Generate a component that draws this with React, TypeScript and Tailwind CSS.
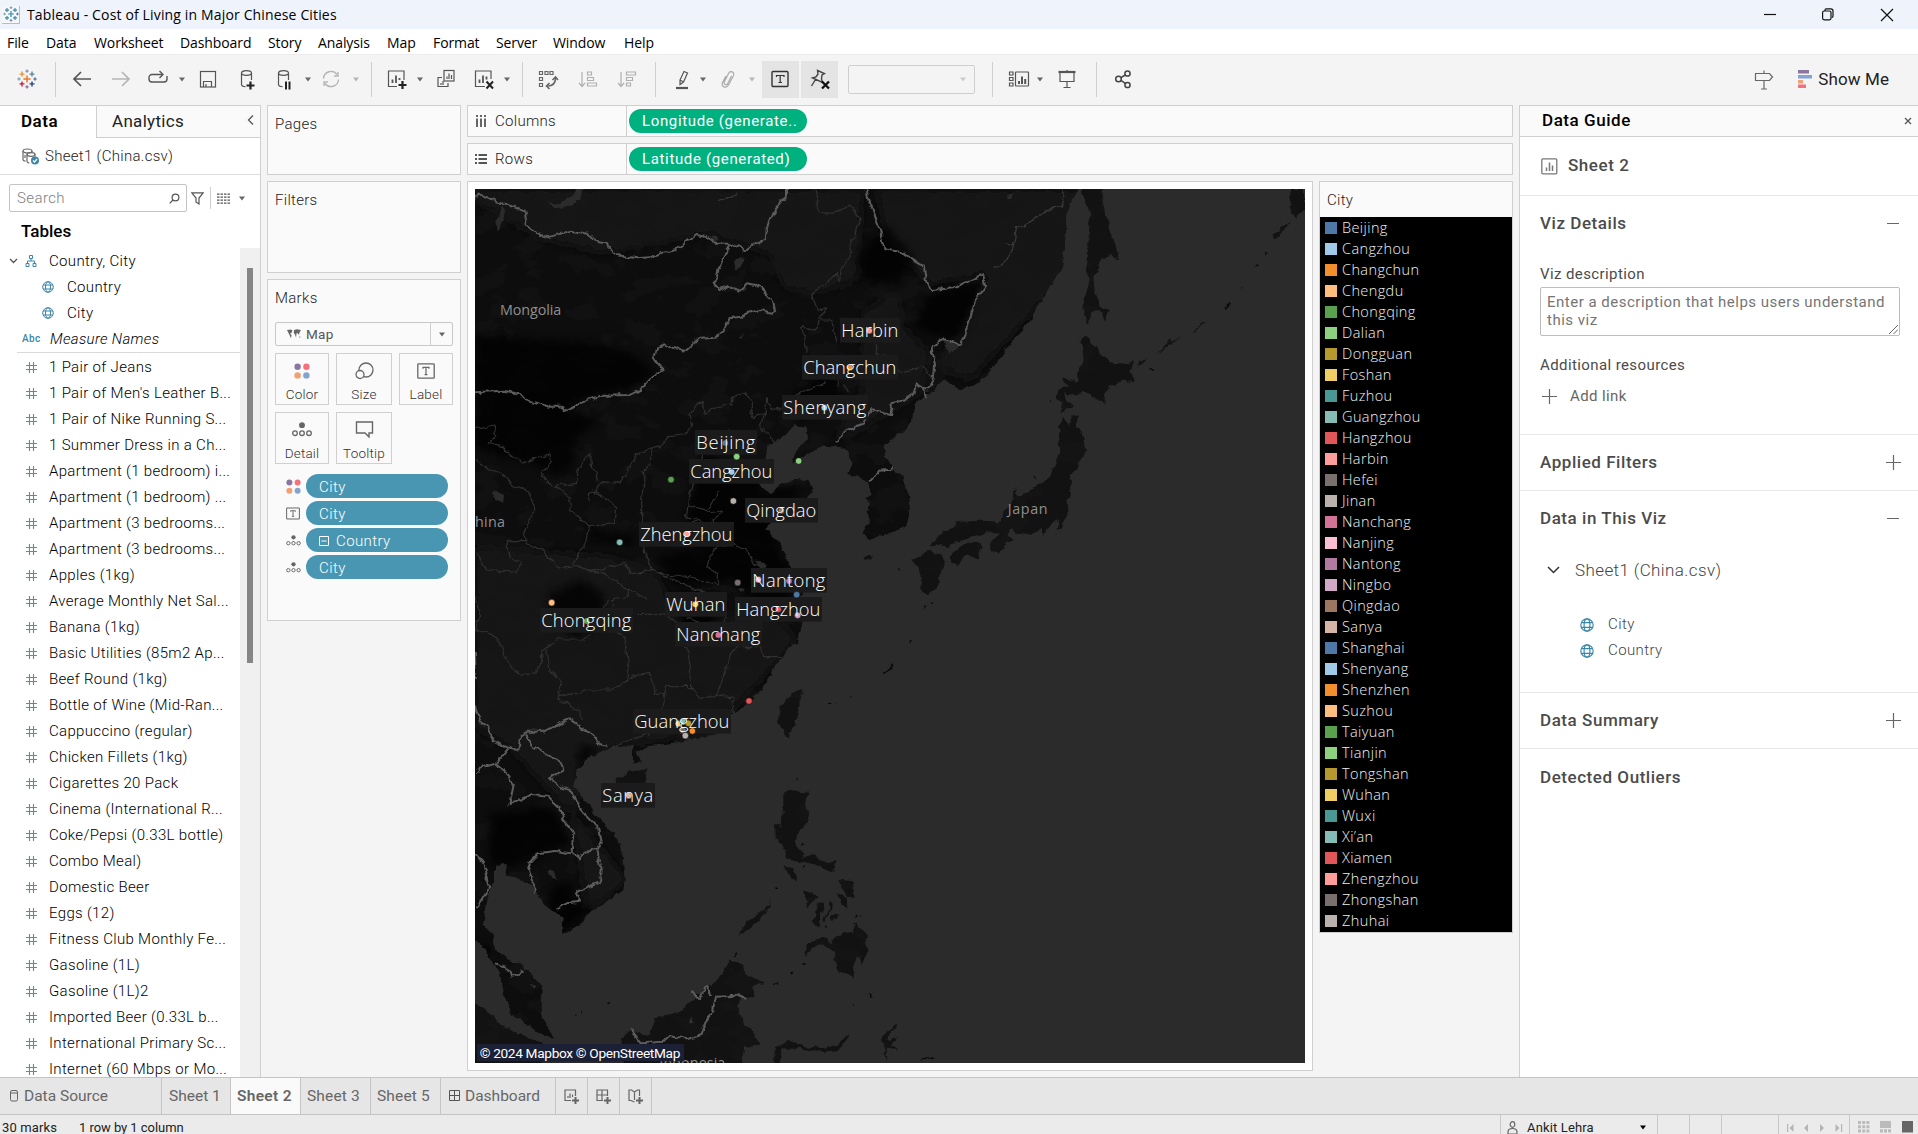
import React from "react";

type Kids = { children?: React.ReactNode };

/* ---------- shared icons ---------- */

function Icon({ size = 22, children, stroke = "#555", sw = 1.2, className = "" }: Kids & { size?: number; stroke?: string; sw?: number; className?: string }) {
  return (
    <svg width={size} height={size} viewBox="0 0 22 22" fill="none" stroke={stroke} strokeWidth={sw} className={"shrink-0 " + className}>
      {children}
    </svg>
  );
}

function Caret({ color = "#666", className = "" }: { color?: string; className?: string }) {
  return (
    <svg width="8" height="5" viewBox="0 0 8 5" className={"shrink-0 " + className}>
      <path d="M1 0.5h6L4 4.5z" fill={color} />
    </svg>
  );
}

function Sep({ className = "" }: { className?: string }) {
  return <div className={"w-px h-[35px] shrink-0 bg-[#cfcfcf] " + className} />;
}

function Globe({ size = 12 }: { size?: number }) {
  return (
    <svg width={size} height={size} viewBox="0 0 12 12" fill="none" stroke="#3b86a8" strokeWidth="1" className="shrink-0">
      <circle cx="6" cy="6" r="5.3" />
      <ellipse cx="6" cy="6" rx="2.5" ry="5.3" />
      <path d="M1.2 4h9.6M1.2 8h9.6" />
    </svg>
  );
}

function Dots({ size = 16 }: { size?: number }) {
  return (
    <svg width={size} height={size} viewBox="0 0 16 16" className="shrink-0">
      <circle cx="3.6" cy="3.8" r="3.2" fill="#8b76a0" />
      <circle cx="12.4" cy="3.8" r="3.2" fill="#f3717d" />
      <circle cx="3.6" cy="12.4" r="3.2" fill="#f1a074" />
      <circle cx="12.4" cy="12.4" r="3.2" fill="#81a5cf" />
    </svg>
  );
}

function DetailIcon({ w = 20, h = 15 }: { w?: number; h?: number }) {
  return (
    <svg width={w} height={h} viewBox="0 0 20 15" fill="none" stroke="#666" strokeWidth="1.3" className="shrink-0">
      <circle cx="10" cy="3.2" r="2.9" fill="#666" stroke="none" />
      <circle cx="3" cy="11.2" r="2.3" />
      <circle cx="10" cy="11.2" r="2.3" />
      <circle cx="17" cy="11.2" r="2.3" />
    </svg>
  );
}

function LabelIcon({ w = 18, h = 16 }: { w?: number; h?: number }) {
  return (
    <svg width={w} height={h} viewBox="0 0 18 16" fill="none" stroke="#666" strokeWidth="1.3" className="shrink-0">
      <rect x="0.8" y="0.8" width="16.4" height="14.4" rx="0.8" />
      <path d="M6 5.8V4.4h6v1.4M9 4.4v7.2M7.6 11.6h2.8" strokeWidth="1.2" />
    </svg>
  );
}

function PlusMark({ className = "" }: { className?: string }) {
  return (
    <svg width="15" height="15" viewBox="0 0 15 15" className={className}>
      <path d="M7.5 0v15M0 7.5h15" stroke="#666" strokeWidth="1.2" />
    </svg>
  );
}

function TableauLogo({ mono = false, size = 20 }: { mono?: boolean; size?: number }) {
  const c = mono ? ["#3b86a8", "#3b86a8", "#3b86a8", "#3b86a8", "#3b86a8"] : ["#e8762b", "#eb912c", "#59879b", "#c72037", "#1f457e"];
  return (
    <svg width={size} height={size} viewBox="0 0 20 20" fill="none" strokeWidth="1.4" className="shrink-0">
      <path d="M10 6.4v7.2M6.4 10h7.2" stroke={c[0]} strokeWidth="1.5" />
      <path d="M5 2.6v5M2.5 5.1h5" stroke={c[1]} />
      <path d="M15 2.6v5M12.5 5.1h5" stroke={c[2]} />
      <path d="M5 12.4v5M2.5 14.9h5" stroke={c[3]} />
      <path d="M15 12.4v5M12.5 14.9h5" stroke={c[4]} />
      <path d="M10 0.4v3.4M8.3 2.1h3.4" stroke="#6b86a8" strokeWidth="1" />
      <path d="M10 16.2v3.4M8.3 17.9h3.4" stroke="#6b5f96" strokeWidth="1" />
      <path d="M2 8.3v3.4M0.3 10h3.4" stroke="#7199a6" strokeWidth="1" />
      <path d="M18 8.3v3.4M16.3 10h3.4" stroke="#3c5e92" strokeWidth="1" />
    </svg>
  );
}

/* ---------- title, menu and toolbar ---------- */

const menus: [string, string][] = [
  ["File", "w-[39px]"],
  ["Data", "w-[48px]"],
  ["Worksheet", "w-[86px]"],
  ["Dashboard", "w-[88px]"],
  ["Story", "w-[50px]"],
  ["Analysis", "w-[69px]"],
  ["Map", "w-[46px]"],
  ["Format", "w-[63px]"],
  ["Server", "w-[57px]"],
  ["Window", "w-[71px]"],
  ["Help", "w-[40px]"],
];

function TitleBar() {
  return (
    <div className="h-[29px] shrink-0 bg-[#eff3fb] flex items-center">
      <div className="ml-[2px] size-[18px] bg-[#f4f6f8] border-r border-b border-[#bbb] flex items-center justify-center">
        <TableauLogo mono size={16} />
      </div>
      <span className="ml-[7px] text-[14px] text-black font-['Open_Sans'] tracking-[0.15px]">Tableau - Cost of Living in Major Chinese Cities</span>
      <svg width="150" height="16" viewBox="0 0 150 16" className="ml-auto mr-[16px]" fill="none" stroke="#111" strokeWidth="1.2">
        <path d="M12 7.5h12" />
        <rect x="70.6" y="4" width="8.4" height="8.8" rx="1.5" />
        <path d="M73 4V3.2c0-.7.5-1.3 1.3-1.3h4.5c1.2 0 2.2 1 2.2 2.2v5c0 .8-.5 1.4-1.2 1.4" />
        <path d="M129 2l12 12M141 2l-12 12" />
      </svg>
    </div>
  );
}

function MenuBar() {
  return (
    <div className="h-[25px] shrink-0 bg-white flex items-center pl-[7px] pt-[2px] font-['Open_Sans'] text-[14px] tracking-[-0.1px] text-black">
      {menus.map(([m, w]) => (
        <span key={m} className={w}>
          {m}
        </span>
      ))}
    </div>
  );
}

function Toolbar() {
  return (
    <div className="h-[51px] shrink-0 bg-[#f4f4f4] border-t border-[#ececec] flex items-center pl-[17px] pr-[29px] pb-[2px]">
      <TableauLogo />
      <Sep className="ml-[18px]" />
      <Icon className="ml-[15px]" sw={1.7}><path d="M20 11H3.5M10 4l-7 7 7 7" /></Icon>
      <Icon className="ml-[17px]" stroke="#b5b5b5" sw={1.7}><path d="M2 11h16.5M12 4l7 7-7 7" /></Icon>
      <Icon className="ml-[15px]" sw={1.4}><path d="M15 6.5H5a3 3 0 0 0-3 3v1.5a3 3 0 0 0 3 3h12a3 3 0 0 0 3-3V8" /><path d="M12.5 3l3.5 3.5-3.5 3.5" /></Icon>
      <Caret className="ml-[9px]" />
      <Icon className="ml-[11px]"><rect x="3.5" y="3.5" width="15" height="15.5" /><path d="M6.5 19v-5.5h8V19M9 16v3" /></Icon>
      <Icon className="ml-[17px]"><ellipse cx="10.5" cy="5" rx="5" ry="2.3" /><path d="M5.500 5v11.500c0 1.200 1.800 2 4 2.200M15.500 5v7" /><path d="M14.500 13.500v8M10.500 17.500h8" stroke="#222" strokeWidth="2.2" /></Icon>
      <Icon className="ml-[15px]"><ellipse cx="10.5" cy="5" rx="5" ry="2.3" /><path d="M5.500 5v11.500c0 1.200 1.800 2 4 2.200M15.500 5v7" /><path d="M13 13.500v8M16.500 13.500v8" stroke="#222" strokeWidth="2" /></Icon>
      <Caret className="ml-[9px]" />
      <Icon className="ml-[8px]" stroke="#b5b5b5" sw={1.4}><path d="M3.5 10.500a7.500 7.500 0 0 1 13.500-4M18.500 11.500a7.500 7.500 0 0 1-13.500 4" /><path d="M14 8h4V4M8 14H4v4" /></Icon>
      <Caret color="#b5b5b5" className="ml-[10px]" />
      <Sep className="ml-[11px]" />
      <Icon className="ml-[14px]"><path d="M18 12V3H2.500v15.500H11" /><path d="M6.500 15v-3.500M10 15V7.500M13.500 12v-2" strokeWidth="1.800" /><path d="M16.500 13v8M12.500 17h8" stroke="#222" strokeWidth="2.2" /></Icon>
      <Caret className="ml-[8px]" />
      <Icon className="ml-[11px]"><rect x="9" y="2.500" width="10" height="10.500" /><path d="M12 11V8.500M14 11V5.500M16.500 11V7" /><path d="M7 9.500H3v9h10v-3.500M6 17v-2M8 17v-4" /></Icon>
      <Icon className="ml-[16px]"><path d="M18 11V3H2.500v15.500H12" /><path d="M6.500 15v-3.500M10 15V7.500M13.500 11.500v-3" strokeWidth="1.800" /><path d="M13.500 13.500l6.500 7M20 13.500l-6.500 7" stroke="#222" strokeWidth="2" /></Icon>
      <Caret className="ml-[8px]" />
      <Sep className="ml-[11px]" />
      <Icon className="ml-[14px]" stroke="#666"><path d="M2.500 3.500h3v3h-3zM8 3.500h3v3H8zM13 3.500h3v3h-3zM2.500 9.500h3v3h-3zM2.500 15.500h3v3h-3z" /><path d="M18.500 10c0 5-3 8-8 8" strokeWidth="1.600" /><path d="M15.500 12l3-3 2.500 3M12.500 15l-3 3 3 3" strokeWidth="1.600" /></Icon>
      <Icon className="ml-[18px]" stroke="#b0b0b0"><path d="M5 4v14M2 15l3 3.500L8 15" /><path d="M10.500 4h4v3h-4zM10.500 9.500h6v3h-6zM10.500 15h9v3h-9z" /></Icon>
      <Icon className="ml-[17px]" stroke="#b0b0b0"><path d="M5 4v14M2 15l3 3.500L8 15" /><path d="M10.500 4h9v3h-9zM10.500 9.500h6v3h-6zM10.500 15h4v3h-4z" /></Icon>
      <Sep className="ml-[17px]" />
      <Icon className="ml-[15px]"><path d="M9 12L13 3.500l3.500 1.500-4 9-3.500 2.500zM9 12l3.500 2" /><path d="M5 20h12" strokeWidth="2.200" /></Icon>
      <Caret className="ml-[6px]" />
      <Icon className="ml-[10px]" stroke="#aaa"><path d="M14.500 8l-4 8a2 2 0 0 1-3.500-1.500l4.500-9c1.700-3.500 6.500-1.500 5 2L11.500 17c-2 3.800-8 2-6-2.500L9 8" /></Icon>
      <Caret color="#b5b5b5" className="ml-[9px]" />
      <div className="ml-[6px] w-[37px] h-[37px] bg-[#e4e4e4] flex items-center justify-center">
        <Icon stroke="#333" sw={1.4} className="ml-[-2px]"><rect x="3" y="3.500" width="16" height="15" rx="1" /><path d="M7.500 9V7.500H15V9M11.200 7.500v7M9.500 14.500H13" strokeWidth="1.200" /></Icon>
      </div>
      <div className="ml-[2px] w-[37px] h-[37px] bg-[#e4e4e4] flex items-center justify-center">
        <Icon stroke="#444" sw={1.4}><path d="M8.500 2.500l7 3-2.500 1.500-.5 4 1 3.500-10-4.500 3.500-1 2-3zM6.500 11.500L2.500 18" /><path d="M13 13.500l7 7M20 13.500l-7 7" stroke="#111" strokeWidth="2.300" /></Icon>
      </div>
      <div className="ml-[10px] w-[127px] h-[29px] border border-[#cfcfcf] rounded-[2px] flex items-center justify-end pr-[7px]">
        <Caret color="#ccc" />
      </div>
      <Sep className="ml-[17px]" />
      <Icon className="ml-[15px]"><path d="M1.500 4h3.500v3H1.500zM1.500 9.500h3.500v3H1.500zM1.500 15h3.500v3H1.500z" /><rect x="7.500" y="4" width="13" height="14" rx="0.500" /><path d="M11 16v-3M14 16V8.500M17.200 16v-5" strokeWidth="2" /></Icon>
      <Caret className="ml-[6px]" />
      <Icon className="ml-[12px]"><path d="M2.500 4h17" strokeWidth="2.200" /><path d="M4 5v8.500h14V5M11 13.500v6M7.500 19.500h7M11 2v2" /></Icon>
      <Sep className="ml-[18px]" />
      <Icon className="ml-[16px]" stroke="#444" sw={1.5}><circle cx="5.500" cy="11" r="2.800" /><circle cx="14.500" cy="5.500" r="2.600" /><circle cx="14.500" cy="17" r="2.600" /><path d="M8 9.600l4.200-2.600M8 12.400l4.200 3" /></Icon>
      <Icon className="ml-auto" stroke="#666"><path d="M2.500 5.500h14l3 3.500-3 3.500h-14zM11 2.500v3M11 12.500V21M8 21h6" /></Icon>
      <svg width="15" height="18" viewBox="0 0 15 18" className="ml-[23px] shrink-0">
        <path d="M0 0h11v3.500H0z" fill="#8b76a0" />
        <path d="M0 5h14v3.500H0z" fill="#81a5cf" />
        <path d="M0 10h5v3.500H0z" fill="#f1a074" />
        <path d="M0 14.500h8V18H0z" fill="#f3717d" />
      </svg>
      <span className="ml-[5px] text-[17px] leading-none text-[#222] whitespace-nowrap tracking-[0.1px]">Show Me</span>
    </div>
  );
}

/* ---------- data pane ---------- */

const measures = [
  "1 Pair of Jeans",
  "1 Pair of Men's Leather B...",
  "1 Pair of Nike Running S...",
  "1 Summer Dress in a Ch...",
  "Apartment (1 bedroom) i...",
  "Apartment (1 bedroom) ...",
  "Apartment (3 bedrooms...",
  "Apartment (3 bedrooms...",
  "Apples (1kg)",
  "Average Monthly Net Sal...",
  "Banana (1kg)",
  "Basic Utilities (85m2 Ap...",
  "Beef Round (1kg)",
  "Bottle of Wine (Mid-Ran...",
  "Cappuccino (regular)",
  "Chicken Fillets (1kg)",
  "Cigarettes 20 Pack",
  "Cinema (International R...",
  "Coke/Pepsi (0.33L bottle)",
  "Combo Meal)",
  "Domestic Beer",
  "Eggs (12)",
  "Fitness Club Monthly Fe...",
  "Gasoline (1L)",
  "Gasoline (1L)2",
  "Imported Beer (0.33L b...",
  "International Primary Sc...",
  "Internet (60 Mbps or Mo...",
];

function DataPane() {
  return (
    <div className="w-[261px] shrink-0 border-r border-t border-[#cfcfcf] bg-white flex flex-col overflow-hidden">
      <div className="h-[32px] shrink-0 flex">
        <div className="w-[96px] pl-[21px] pt-[5px] text-[17px] leading-[20px] font-semibold text-black tracking-[0.5px]">Data</div>
        <div className="flex-1 border-l border-b border-[#cfcfcf] bg-[#fafafa] flex items-center justify-between pl-[15px] pr-[6px]">
          <span className="text-[17px] text-[#222] tracking-[0.3px]">Analytics</span>
          <svg width="7" height="12" viewBox="0 0 7 12" fill="none" stroke="#555" strokeWidth="1.300" className="mb-[3px]"><path d="M6 1.500L1.500 6 6 10.500" /></svg>
        </div>
      </div>
      <div className="h-[37px] shrink-0 border-b border-[#dedede] flex items-center pl-[22px]">
        <svg width="18" height="17" viewBox="0 0 18 17" fill="none" stroke="#666" strokeWidth="1.200">
          <ellipse cx="5.500" cy="3" rx="4.500" ry="2" />
          <path d="M1 3v8.500c0 .8 1 1.500 2.500 1.700M10 3v1.500" />
          <ellipse cx="9" cy="6.500" rx="4" ry="1.800" />
          <path d="M5 6.500v7c0 .8 1 1.300 2.300 1.600M13 6.500v2M3 7v3" />
          <circle cx="13" cy="12.500" r="4" fill="#3b86a8" stroke="none" />
          <path d="M11 12.500l1.500 1.500 2.500-3" stroke="#fff" />
        </svg>
        <span className="ml-[5px] text-[15px] font-light text-[#222] tracking-[0.3px]">Sheet1 (China.csv)</span>
      </div>
      <div className="h-[46px] shrink-0 flex items-center pl-[9px]">
        <div className="w-[178px] h-[28px] border border-[#c4c4c4] rounded-[2px] flex items-center justify-between pl-[7px] pr-[6px]">
          <span className="text-[15px] font-light text-[#808080] tracking-[0.4px]">Search</span>
          <svg width="11" height="11" viewBox="0 0 11 11" fill="none" stroke="#555" strokeWidth="1.200"><circle cx="6.500" cy="4.500" r="3.400" /><path d="M4 7L.7 10.300" /></svg>
        </div>
        <svg width="13" height="13" viewBox="0 0 13 13" fill="none" stroke="#555" strokeWidth="1.200" className="ml-[4px]"><path d="M.8.800h11.400L8 6v6L5 10V6z" /></svg>
        <div className="w-px h-[22px] bg-[#cfcfcf] ml-[6px]" />
        <svg width="13" height="11" viewBox="0 0 13 11" stroke="#555" strokeWidth="1.300" className="ml-[6px]"><path d="M0 1.200h13M0 4.200h13M0 7.200h13M0 10.200h13" strokeDasharray="2.500 1" /></svg>
        <Caret className="ml-[8px]" />
      </div>
      <div className="h-[27px] shrink-0 pl-[21px] text-[17px] leading-[20px] font-medium text-black">Tables</div>
      <div className="flex-1 min-h-0 flex">
        <div className="w-[240px] text-[15px] font-light tracking-[0.33px] text-black leading-[26px] overflow-hidden">
          <div className="h-[26px] flex items-center pl-[9px]">
            <svg width="9" height="6" viewBox="0 0 9 6" fill="none" stroke="#555" strokeWidth="1.300"><path d="M1 1l3.500 3.500L8 1" /></svg>
            <svg width="12" height="12" viewBox="0 0 12 12" fill="none" stroke="#3b86a8" strokeWidth="1" className="ml-[7px] mr-[12px]"><path d="M4.500.500h3v3h-3zM1 8.500h3v3H1zM8 8.500h3v3H8zM6 3.500V6M2.500 8.500V6h7v2.500" /></svg>
            Country, City
          </div>
          <div className="h-[26px] flex items-center pl-[42px] gap-[13px]"><Globe />Country</div>
          <div className="h-[26px] flex items-center pl-[42px] gap-[13px]"><Globe />City</div>
          <div className="h-[26px] flex items-center pl-[22px]">
            <span className="w-[28px] text-[10px] font-medium text-[#3b86a8]">Abc</span>
            <span className="italic">Measure Names</span>
          </div>
          <div className="h-px bg-[#d9d9d9] ml-[17px] mb-px" />
          {measures.map((m, i) => (
            <div key={i} className="h-[26px] flex items-center pl-[26px] whitespace-nowrap">
              <svg width="11" height="11" viewBox="0 0 11 11" stroke="#3fa180" strokeWidth="1.100" className="shrink-0 mr-[12px]"><path d="M3.500 0v11M7.500 0v11M0 3.500h11M0 7.500h11" /></svg>
              {m}
            </div>
          ))}
        </div>
        <div className="w-[20px] bg-[#f0f0f0] pl-[7px] pt-[20px]">
          <div className="w-[6px] h-[395px] bg-[#868686]" />
        </div>
      </div>
    </div>
  );
}

/* ---------- shelves and marks card ---------- */

function MarkButton({ label, w, children }: Kids & { label: string; w: string }) {
  return (
    <div className={"h-[52px] border border-[#cfcfcf] bg-[#fafafa] flex flex-col items-center " + w}>
      <div className="h-[33px] flex items-center justify-center">{children}</div>
      <span className="text-[13.5px] leading-[14px] text-[#333] tracking-[0.2px]">{label}</span>
    </div>
  );
}

function MarkPill({ icon, children }: Kids & { icon: React.ReactNode }) {
  return (
    <div className="flex items-center">
      <div className="w-[36px] flex justify-center">{icon}</div>
      <div className="ml-[-5px] w-[142px] h-[24px] rounded-full bg-[#4996b2] text-white text-[15px] tracking-[0.4px] flex items-center pl-[13px] pt-px">{children}</div>
    </div>
  );
}

function CardsColumn() {
  const card = "border border-[#cfcfcf] bg-[#fafafa] text-[15px] font-light tracking-[0.3px] text-[#222] leading-[20px]";
  return (
    <div className="w-[194px] ml-[6px] shrink-0 flex flex-col gap-[6px]">
      <div className={card + " h-[70px] pl-[7px] pt-[8px]"}>Pages</div>
      <div className={card + " h-[92px] pl-[7px] pt-[8px]"}>Filters</div>
      <div className={card + " h-[342px] pl-[7px] pt-[8px]"}>
        Marks
        <div className="mt-[14px] w-[178px] h-[24px] border border-[#c8c8c8] rounded-[2px] flex items-center pl-[11px]">
          <svg width="14" height="10" viewBox="0 0 14 10" fill="#666"><path d="M0 1l4-.5 1.500 1L4.500 4 3 4.500 4.500 6 4 9.500 3 7 1.500 4zM7 1l3-.8L14 1l-1.500 2.500L12 6l-1.500-2L9.500 4.500 9 8.500 8 5.500 6.800 4zM12 7.500l1.500.3-.5 1.200z" /></svg>
          <span className="ml-[5px] text-[13.5px] font-normal text-[#555] flex-1">Map</span>
          <div className="w-[22px] h-full border-l border-[#cfcfcf] flex items-center justify-center"><Caret /></div>
        </div>
        <div className="mt-[7px] grid grid-cols-[61px_63px_54px] gap-y-[7px]">
          <MarkButton label="Color" w="w-[54px]"><Dots /></MarkButton>
          <MarkButton label="Size" w="w-[56px]">
            <svg width="19" height="18" viewBox="0 0 19 18" fill="none" stroke="#666" strokeWidth="1.300"><circle cx="11" cy="8" r="7" /><circle cx="5" cy="12.500" r="4" fill="#fafafa" /></svg>
          </MarkButton>
          <MarkButton label="Label" w="w-[54px]"><LabelIcon /></MarkButton>
          <MarkButton label="Detail" w="w-[54px]"><DetailIcon /></MarkButton>
          <MarkButton label="Tooltip" w="w-[56px]">
            <svg width="19" height="17" viewBox="0 0 19 17" fill="none" stroke="#666" strokeWidth="1.400"><path d="M1.500 1h16v11H14v4l-4-4H1.500z" /></svg>
          </MarkButton>
        </div>
        <div className="mt-[10px] flex flex-col gap-[3px]">
          <MarkPill icon={<Dots size={15} />}>City</MarkPill>
          <MarkPill icon={<LabelIcon w={14} h={13} />}>City</MarkPill>
          <MarkPill icon={<DetailIcon w={15} h={11} />}>
            <svg width="10" height="10" viewBox="0 0 10 10" fill="none" stroke="#fff" className="mr-[7px]"><path d="M.5.500h9v9h-9zM2.500 5h5" /></svg>
            Country
          </MarkPill>
          <MarkPill icon={<DetailIcon w={15} h={11} />}>City</MarkPill>
        </div>
      </div>
    </div>
  );
}

function Shelf({ icon, label, children }: Kids & { icon: React.ReactNode; label: string }) {
  return (
    <div className="h-[32px] shrink-0 border border-[#cfcfcf] bg-[#fafafa] flex items-center">
      <div className="w-[159px] h-full border-r border-[#cfcfcf] flex items-center pl-[7px] text-[15px] font-light tracking-[0.3px] text-[#222]">
        {icon}
        <span className="ml-[8px] mt-px">{label}</span>
      </div>
      <div className="ml-[2px] w-[178px] h-[24px] rounded-full bg-[#00b180] text-white text-[15px] tracking-[0.65px] leading-[25px] pl-[13px] whitespace-nowrap">{children}</div>
    </div>
  );
}

/* ---------- map (drawing units are a third of a pixel) ---------- */

const mainland =
  "M1825 27L1800 75 1785 120 1785 200 1775 270 1750 305 1720 350 1695 400 1670 440 1630 480 1580 545 1555 585 1510 615 1470 628 1440 615 1425 598 1390 630 1370 640 1335 675 1330 720 1305 750 1270 778 1240 795 1245 830 1270 858 1300 900 1318 950 1320 1005 1305 1040 1280 1052 1235 1065 1195 1080 1180 1060 1200 1025 1190 990 1200 970 1180 955 1205 945 1195 910 1165 890 1138 885 1148 850 1120 803 1060 796 1010 825 966 850 980 812 1010 780 1012 745 970 735 940 770 895 797 885 840 860 860 870 915 880 935 908 940 930 915 970 900 1012 903 1028 930 1010 955 960 985 900 1030 883 1050 930 1085 955 1150 985 1200 1000 1235 985 1250 1000 1270 940 1275 1000 1310 1000 1330 985 1360 985 1390 960 1400 940 1430 910 1465 905 1490 860 1540 830 1575 790 1600 735 1665 620 1687 525 1700 500 1718 517 1750 490 1745 487 1702 430 1695 385 1718 350 1738 318 1772 313 1822 345 1865 390 1920 430 1960 455 2010 466 2080 460 2130 410 2170 360 2190 345 2220 280 2265 278 2205 240 2190 205 2150 195 2130 165 2100 110 2090 110 2055 75 2057 75 2100 50 2150 40 2230 65 2260 85 2320 120 2342 155 2350 190 2390 215 2420 215 2510 245 2560 250 2575 210 2560 160 2530 130 2505 100 2450 90 2380 75 2355 45 2310 15 2280 0 2270 0 0 1825 0Z";

const islands = [
  "M1835 27L1860 100 1855 200 1845 270 1860 300 1845 350 1843 405 1852 437 1865 395 1885 388 1910 422 1913 390 1895 385 1870 330 1875 280 1895 235 1925 228 1948 240 1920 150 1905 90 1895 27Z",
  "M1845 467L1865 485 1900 530 1935 552 1975 555 1990 540 1980 570 1988 600 1950 605 1920 620 1903 645 1900 670 1860 645 1835 635 1810 645 1780 640 1790 665 1812 683 1785 685 1772 702 1775 670 1757 650 1765 630 1795 615 1780 600 1790 597 1825 607 1825 570 1840 550 1842 510 1833 480Z",
  "M1805 705L1823 710 1820 735 1835 760 1848 800 1840 830 1825 855 1800 885 1805 935 1790 970 1793 1005 1775 1040 1760 1050 1765 1022 1745 1030 1720 1065 1715 1045 1685 1065 1640 1055 1620 1040 1615 1070 1632 1080 1605 1095 1585 1125 1560 1105 1565 1080 1590 1060 1550 1060 1500 1070 1455 1085 1430 1100 1382 1098 1385 1085 1425 1055 1460 1027 1530 1022 1595 1025 1600 995 1635 955 1626 925 1650 950 1700 920 1740 890 1755 850 1768 815 1765 745 1780 715 1800 735Z",
  "M1375 1108L1410 1125 1422 1150 1410 1185 1400 1225 1380 1243 1350 1230 1355 1190 1345 1160 1325 1137 1360 1125Z",
  "M1445 1125L1470 1100 1515 1085 1538 1105 1518 1135 1495 1122 1475 1135 1460 1162 1447 1150Z",
  "M995 1528L998 1542 975 1630 953 1678 925 1620 930 1585 965 1540Z",
  "M440 1800L475 1775 535 1768 530 1800 510 1835 470 1850 440 1830Z",
  "M940 1840L960 1833 1015 1838 1005 1890 1020 1900 1010 1935 985 1950 980 1995 1000 2030 1035 2022 1065 2045 1095 2042 1090 2075 1050 2060 1015 2045 985 2042 950 2035 945 2010 915 1970 912 1935 935 1940 940 1870Z",
  "M940 2055L975 2070 978 2105 960 2095Z",
  "M1103 2097L1145 2100 1150 2155 1130 2145Z",
  "M1105 2140L1130 2150 1132 2185 1115 2175Z",
  "M1003 2128L1045 2150 1008 2182Z",
  "M1040 2168L1068 2168 1052 2205 1048 2245 1022 2220 1042 2205Z",
  "M1083 2165L1088 2172 1062 2228 1058 2222Z",
  "M1082 2210L1105 2202 1103 2220 1088 2222Z",
  "M1150 2225L1185 2260 1193 2320 1177 2355 1168 2330 1150 2345 1155 2392 1110 2375 1090 2340 1095 2315 1060 2290 1020 2310 1005 2335 1010 2295 1060 2265 1080 2290 1120 2260 1150 2255Z",
  "M803 2272L830 2225 900 2178 897 2150 902 2185 850 2235Z",
  "M780 2342L815 2350 830 2385 885 2408 845 2420 860 2445 812 2455 805 2500 830 2540 872 2593 825 2600 815 2660 455 2660 455 2580 475 2555 540 2565 555 2515 625 2500 665 2460 725 2415 745 2395Z",
  "M912 2650L915 2605 955 2580 1000 2598 1060 2605 1100 2595 1138 2560 1135 2577 1105 2610 1060 2615 1000 2607 935 2605 922 2650Z",
  "M1236 2570L1285 2525 1280 2540 1255 2560 1252 2580 1285 2570 1262 2597 1285 2610 1248 2605 1254 2650 1240 2600Z",
  "M2460 27L2505 27 2505 87 2475 115 2463 95Z",
  "M0 2460L60 2500 90 2530 140 2560 215 2590 215 2660 0 2660Z",
  "M2410 178L2412 165 2428 158 2435 140 2460 130 2440 148 2430 168Z",
  "M2166 460L2200 425 2203 428 2175 456Z",
  "M2058 525L2080 505 2098 475 2100 490 2140 465 2105 492Z",
  "M1996 568L2010 545 2035 530 2020 545Z",
  "M1182 1138L1200 1125 1210 1130 1195 1140Z",
];

const specks = "M2388 225l2-12M2356 262l6-6M2314 328h3M2262 385l16-16M2038 567h14M1816 486h3M1740 664h3M1695 885l3 12M1628 935l12-8M1360 1282h6M1380 1278l2-8M1315 1388l6-8M1265 1458l3-4M1242 1482l10-14 15-10M1080 1570h4M1095 1568h3M1142 1550h3M980 1798h3M1288 1168h5M792 2296h3M797 2325l2-8M1000 1995l4-6M916 2120l10 4M1205 2440v14M1152 2480h3M1355 2640l36-6M912 2412h16M960 2378h8M1000 2352h10M416 2465l5 6M316 2506h3M336 2495h3M1155 2215l3-10M1060 2240h5M1095 2040v8M1000 2060h6M1170 2210h3";

const countryBorders = [
  "M15 60L25 40 80 65 130 80 163 92 170 130 187 157 235 172 300 152 360 162 375 182 410 187 415 205 440 225 500 235 540 232 580 218 620 210 650 185 680 165 710 172 735 188 778 188 825 212 860 185 887 180 890 145 915 90 948 50 948 27",
  "M778 190L745 270 740 295 728 305 745 330 775 318 810 332 830 310 860 315 910 365 915 393 905 398 870 390 830 400 810 410 780 415 765 440 760 452 730 470 690 473 650 510 610 503 580 490 565 500 555 535 578 570 540 595 510 630 470 645 385 648 330 670 285 692 265 680 235 680 165 658 150 642 100 632 15 637",
  "M1190 27L1195 60 1212 100 1230 150 1240 205 1290 212 1345 250 1365 258 1370 300 1383 330 1450 325 1480 308 1540 285 1545 320 1520 355 1505 400 1490 455 1472 495 1425 478 1385 500 1395 560 1390 600 1375 625 1358 625 1338 612 1330 640 1305 660 1265 670 1262 705 1200 690 1180 730 1120 760 1098 790",
  "M1358 625L1370 652M1260 672L1270 690 1260 706",
  "M1200 905L1225 875 1265 872 1272 858",
  "M412 1697L385 1692 365 1665 300 1618 260 1635 220 1655 165 1655 150 1670 145 1712 115 1702 70 1680 50 1640 30 1625 15 1580",
  "M165 1660L185 1695 230 1725 270 1740 280 1770 240 1795 270 1820 300 1832 350 1910 388 1950 395 1990 385 2010 395 2070 390 2105 340 2125 320 2135 330 2165 290 2170 260 2188",
  "M75 1750L115 1785 130 1820 118 1875 190 1842 230 1848 275 1890 280 1920 310 1960 305 2015 330 2035 340 2015 385 2010",
  "M300 2020L255 2013 205 2020 175 2050 190 2110 195 2138",
  "M15 1778L45 1760 80 1750 115 1705M15 2020L40 2050 57 2125 20 2185",
  "M78 2350L110 2360 120 2390 150 2385 162 2368",
  "M480 2545L515 2590 580 2585 600 2565 650 2578 695 2565 710 2520 730 2490 738 2450 800 2447 828 2457M668 2435L690 2460 702 2425 716 2425 720 2445",
  "M15 1420L18 1500",
];

const provinceBorders = [
  "M1032 27L1045 95 1100 97 1140 72 1172 115 1140 195 1140 235 1115 265 1108 302 1100 280 1025 345 1045 395 1070 380 1060 398 1048 420 1085 420 1092 455 1102 485M1048 425L1035 452 995 440 1008 500 1008 520",
  "M1215 490L1220 520 1260 530 1290 580 1330 570 1355 555 1385 590",
  "M1070 608L1000 635 960 660M1120 608L1135 640M1100 600L1105 625M890 655L905 690 935 680M890 655L885 700 850 712 840 690 850 670 828 637 790 650 785 675 740 680 705 700 700 665 680 670 660 700 668 740 640 765 595 770 570 800 500 820 470 880 450 910 390 905 378 940 355 940 355 960M885 700L872 735 895 765 910 790",
  "M15 745L75 735 80 765 55 790 95 800 120 825 160 850 200 835 240 825 245 850 215 880 235 910 250 920 320 910 325 860 360 820 360 855 385 880 380 905M15 835L60 870 100 880 130 920 180 940 195 990 160 1060 170 1085 110 1085 120 1130 155 1150 140 1175 100 1170 100 1175 50 1170 20 1120",
  "M550 805L540 850 520 870 525 910 515 960 515 1060 525 1120 545 1170 480 1180 465 1150 400 1170 330 1165 310 1160 325 1110 345 1100 355 1040 340 1020 300 990 300 950 250 920",
  "M700 820L690 860 670 900 655 960 650 1010 690 1020 640 1040M655 975L720 995 755 990 735 1020 720 1035M750 930L715 985M780 750L720 800M785 780L860 800",
  "M370 930L440 980 435 1030 355 1040M170 1090L215 1110 270 1165 320 1160 400 1180 475 1230 475 1250 420 1260 380 1310M545 1170L560 1180 640 1210 670 1225 720 1240M560 1180L620 1185 745 1215 745 1180 710 1160 720 1130 740 1100 790 1090 830 1110 850 1150 890 1160",
  "M475 1230L540 1260M500 1300L580 1300 620 1330M15 1250L30 1300 20 1350 80 1370 110 1440 150 1485 200 1475 220 1410 260 1380 340 1380 360 1360M230 1410L240 1470 270 1500 265 1560 330 1590 330 1620M265 1550L360 1530 430 1530 470 1500 475 1450 465 1370 430 1350 430 1270",
  "M475 1490L540 1480 555 1540 585 1540 590 1520 640 1520 665 1520 660 1450 650 1400M665 1520L690 1560 740 1545 780 1430 800 1400 870 1400 880 1430 940 1430M740 1545L785 1550 790 1600M585 1540L575 1590M770 1310L760 1330 690 1330 650 1310M540 1660L480 1680 440 1695",
];

const sites: [number, number, string][] = [
  [1198, 452, "#ff9d9a"], [1139, 563, "#f28e2b"], [1063, 683, "#a0cbe8"], [766, 789, "#4e79a7"], [800, 830, "#8cd17d"],
  [986, 843, "#8cd17d"], [785, 876, "#a0cbe8"], [603, 899, "#59a14f"], [790, 963, "#bab0ac"], [934, 992, "#9d7660"],
  [651, 1063, "#ff9d9a"], [449, 1087, "#86bcb6"], [803, 1208, "#79706e"], [865, 1199, "#fabfd2"], [957, 1203, "#b07aa1"],
  [980, 1244, "#4e79a7"], [925, 1288, "#e15759"], [983, 1306, "#d4a6c8"], [245, 1268, "#ffbe7d"], [350, 1323, "#59a14f"],
  [676, 1273, "#f1ce63"], [745, 1365, "#d37295"], [837, 1563, "#e15759"], [625, 1631, "#f1ce63"], [640, 1625, "#86bcb6"],
  [655, 1630, "#b6992d"], [667, 1653, "#f28e2b"], [639, 1652, "#79706e"], [646, 1667, "#bab0ac"], [476, 1847, "#d7b5a6"],
];

const placeLabels: [string, number, number, number][] = [
  ["Harbin", 1110, 414, 180], ["Changchun", 996, 525, 288], ["Shenyang", 936, 645, 258], ["Beijing", 675, 750, 186],
  ["Cangzhou", 657, 837, 255], ["Qingdao", 825, 954, 219], ["Zhengzhou", 507, 1026, 285], ["Nantong", 843, 1164, 228],
  ["Wuhan", 585, 1236, 186], ["Hangzhou", 795, 1251, 261], ["Chongqing", 210, 1284, 279], ["Nanchang", 615, 1326, 261],
  ["Guangzhou", 489, 1587, 294], ["Sanya", 393, 1809, 162],
];

const lowlands = [
  "M15 460L200 480 400 490 500 530 550 580 480 630 380 645 280 690 390 720 310 780 320 850 260 900 200 850 100 830 15 800Z",
  "M1250 140L1330 230 1290 320 1180 300 1160 220ZM1380 340L1530 300 1500 400 1470 480 1400 470 1330 440Z",
  "M1060 560L1120 640 1000 720 930 690Z",
  "M700 820L850 870 880 940 1000 920 900 1030 960 1170 970 1260 880 1290 780 1200 620 1220 560 1130 690 1100 650 1000 680 900Z",
  "M240 1240L330 1200 400 1240 400 1330 320 1370 230 1320Z",
  "M350 1040L500 1070 480 1095 350 1080Z",
  "M60 1900L250 1880 300 1990 180 2040 110 2060 60 2060Z",
  "M250 2110L310 2110 300 2160 370 2180 280 2265 230 2180Z",
  "M0 2270L60 2300 80 2340 30 2330Z",
  "M600 1240L760 1240 720 1330 640 1340Z",
  "M330 1700L390 1700 320 1790Z",
];

function MapView() {
  return (
    <svg viewBox="15 27 2490 2622" className="w-[830px] h-[874px] block" fontFamily="'Open Sans', 'Noto Sans', sans-serif">
      <defs>
        <filter id="rough" x="0" y="0" width="2520" height="2700" filterUnits="userSpaceOnUse" colorInterpolationFilters="sRGB">
          <feTurbulence type="fractalNoise" baseFrequency="0.035" numOctaves="3" seed="4" result="n" />
          <feDisplacementMap in="SourceGraphic" in2="n" scale="20" xChannelSelector="R" yChannelSelector="G" />
        </filter>
        <filter id="relief" x="0" y="0" width="2520" height="2700" filterUnits="userSpaceOnUse" colorInterpolationFilters="sRGB">
          <feTurbulence type="fractalNoise" baseFrequency="0.009 0.014" numOctaves="5" seed="11" />
          <feColorMatrix values="0 0 0 0 0.09  0 0 0 0 0.09  0 0 0 0 0.09  9 0 0 0 -4.6" />
        </filter>
        <filter id="soft"><feGaussianBlur stdDeviation="12" /></filter>
        <clipPath id="land">
          <path d={mainland} />
          {islands.map((d) => <path key={d} d={d} />)}
        </clipPath>
      </defs>
      <rect x="15" y="27" width="2490" height="2622" fill="#2b2b2b" />
      <g filter="url(#rough)">
        <path d={mainland} fill="#0d0d0d" />
        {islands.map((d) => <path key={d} d={d} fill="#121212" />)}
        <g clipPath="url(#land)">
          <path d="M15 27H1180L1160 300 1040 340 940 320 900 220 700 160 400 220 200 170 15 60ZM1220 27H1830L1780 290 1500 600 1400 560 1560 280 1380 310 1260 200ZM1180 400L1280 330 1300 440 1380 520 1350 640 1150 760 1090 790 1180 620ZM15 1100L420 1130 560 1180 640 1350 900 1290 980 1380 720 1660 420 1700 300 1900 120 1700 15 1640ZM300 1890L470 2100 350 2190 330 2030Z" fill="#151515" filter="url(#soft)" />
          <rect x="0" y="0" width="2520" height="2700" filter="url(#relief)" opacity="0.55" />
          {lowlands.map((d) => <path key={d} d={d} fill="#020202" filter="url(#soft)" opacity="0.75" />)}
        </g>
        <path d={specks} fill="none" stroke="#0a0a0a" strokeWidth="5" />
        <g fill="#2b2b2b">
          <path d="M228 68L270 70 310 45 320 27 342 27 335 55 300 80 260 84ZM92 80L105 85 103 110 88 150 78 152 85 110ZM790 250L815 228 828 235 815 260 795 272ZM802 470L825 462 818 474ZM810 322L830 315 825 330 812 335ZM1425 480L1468 492 1440 525 1428 505ZM60 940L75 932 102 945 100 965 75 960ZM725 170L748 172 742 185 728 182ZM1612 42L1628 40 1625 55 1612 54Z" />
          <path d="M228 2070L240 2065 265 2098 250 2095ZM855 1140L885 1150 890 1165 865 1160ZM805 1218L825 1225 815 1232Z" />
          <path d="M180 2415l18 2-10 10zM655 2525l12-8 4 16z" fill="#333" />
        </g>
        <g fill="none" stroke="#303030" strokeWidth="3.600" strokeLinejoin="round">
          {provinceBorders.map((d) => <path key={d} d={d} />)}
          <path d="M1780 27L1775 75 1720 95 1670 135 1640 145 1630 200 1605 250 1570 265M1610 190l20 5M745 65l60-25" stroke="#383838" strokeWidth="4" />
        </g>
        <g fill="none" stroke="#5c5c5c" strokeWidth="6" strokeLinejoin="round">
          {countryBorders.map((d) => <path key={d} d={d} />)}
        </g>
      </g>
      <g fill="#8f8f8f" fontSize="43">
        <text x="90" y="405" textLength="184">Mongolia</text>
        <text x="15" y="1042" textLength="90">hina</text>
        <text x="1613" y="1001" textLength="120">Japan</text>
        <text x="568" y="2664" textLength="198">Indonesia</text>
      </g>
      {placeLabels.map(([n, x, y, w]) => <rect key={n} x={x} y={y} width={w} height="74" fill="#1b1b1b" />)}
      {sites.map(([x, y, c]) => <circle key={x + "-" + y} cx={x} cy={y} r="10" fill={c} stroke="#0a0a0a" strokeWidth="2" />)}
      <g fill="#ffffff" fontSize="55" fontWeight="300">
        {placeLabels.map(([n, x, y, w]) => (
          <text key={n} x={x + 4} y={y + 58} textLength={w - 9}>{n}</text>
        ))}
      </g>
      <rect x="21" y="2592" width="621" height="52" fill="#1b2035" />
      <text x="29" y="2635" fontSize="41" fill="#fff" fontFamily="Roboto, sans-serif" textLength="602">© 2024 Mapbox © OpenStreetMap</text>
    </svg>
  );
}

/* ---------- legend ---------- */

const legend: [string, string][] = [
  ["Beijing", "bg-[#4e79a7]"], ["Cangzhou", "bg-[#a0cbe8]"], ["Changchun", "bg-[#f28e2b]"], ["Chengdu", "bg-[#ffbe7d]"],
  ["Chongqing", "bg-[#59a14f]"], ["Dalian", "bg-[#8cd17d]"], ["Dongguan", "bg-[#b6992d]"], ["Foshan", "bg-[#f1ce63]"],
  ["Fuzhou", "bg-[#499894]"], ["Guangzhou", "bg-[#86bcb6]"], ["Hangzhou", "bg-[#e15759]"], ["Harbin", "bg-[#ff9d9a]"],
  ["Hefei", "bg-[#79706e]"], ["Jinan", "bg-[#bab0ac]"], ["Nanchang", "bg-[#d37295]"], ["Nanjing", "bg-[#fabfd2]"],
  ["Nantong", "bg-[#b07aa1]"], ["Ningbo", "bg-[#d4a6c8]"], ["Qingdao", "bg-[#9d7660]"], ["Sanya", "bg-[#d7b5a6]"],
  ["Shanghai", "bg-[#4e79a7]"], ["Shenyang", "bg-[#a0cbe8]"], ["Shenzhen", "bg-[#f28e2b]"], ["Suzhou", "bg-[#ffbe7d]"],
  ["Taiyuan", "bg-[#59a14f]"], ["Tianjin", "bg-[#8cd17d]"], ["Tongshan", "bg-[#b6992d]"], ["Wuhan", "bg-[#f1ce63]"],
  ["Wuxi", "bg-[#499894]"], ["Xi’an", "bg-[#86bcb6]"], ["Xiamen", "bg-[#e15759]"], ["Zhengzhou", "bg-[#ff9d9a]"],
  ["Zhongshan", "bg-[#79706e]"], ["Zhuhai", "bg-[#bab0ac]"],
];

function Legend() {
  return (
    <div className="w-[194px] ml-[6px] self-start border border-[#cfcfcf] bg-[#fafafa]">
      <div className="h-[35px] pl-[7px] pt-[8px] text-[15px] font-light tracking-[0.3px] leading-[20px] text-[#222]">City</div>
      <div className="bg-black pb-px">
        {legend.map(([name, c]) => (
          <div key={name} className="h-[21px] flex items-center pl-[5px]">
            <div className={"size-[12px] mr-[5px] " + c} />
            <span className="font-['Open_Sans'] font-light text-[14.5px] leading-[21px] tracking-[0.4px] text-[#f0f0f0]">{name}</span>
          </div>
        ))}
      </div>
    </div>
  );
}

/* ---------- data guide ---------- */

function GuideHeading({ children, sign }: Kids & { sign?: "+" | "-" }) {
  return (
    <div className="h-[55px] flex items-center justify-between pl-[20px] pr-[17px] text-[17px] font-medium text-[#4b4b4b] tracking-[0.55px]">
      <span>{children}</span>
      {sign === "+" && <PlusMark />}
      {sign === "-" && <div className="w-[12px] h-px bg-[#666] mr-[2px]" />}
    </div>
  );
}

function DataGuide() {
  return (
    <div className="w-[399px] shrink-0 border-l border-t border-[#cfcfcf] bg-white text-[#4b4b4b] flex flex-col">
      <div className="h-[31px] border-b border-[#cfcfcf] bg-[#fafafa] flex items-center justify-between pl-[22px] pr-[6px]">
        <span className="text-[17px] font-medium text-black tracking-[0.55px]">Data Guide</span>
        <svg width="8" height="8" viewBox="0 0 8 8" stroke="#555" strokeWidth="1.300"><path d="M1 1l6 6M7 1L1 7" /></svg>
      </div>
      <div className="h-[59px] border-b border-[#e8e8e8] flex items-center pl-[21px]">
        <svg width="17" height="17" viewBox="0 0 17 17" fill="none" stroke="#777" strokeWidth="1.300"><rect x="0.800" y="0.800" width="15" height="15" rx="1" /><path d="M5.500 13V9.500M8.500 13V4.500M11.500 13V7.500" strokeWidth="1.500" /></svg>
        <span className="ml-[10px] text-[17px] font-medium tracking-[0.55px]">Sheet 2</span>
      </div>
      <div className="h-[239px] border-b border-[#e8e8e8]">
        <GuideHeading sign="-">Viz Details</GuideHeading>
        <div className="pl-[20px] pt-[13px] text-[15px] leading-[20px] tracking-[0.4px]">Viz description</div>
        <div className="relative ml-[20px] mt-[3px] w-[360px] h-[49px] border border-[#bdbdbd] rounded-[2px] pl-[6px] pt-[5px] text-[15px] leading-[18px] text-[#757575] tracking-[0.5px]">
          Enter a description that helps users understand this viz
          <svg width="9" height="9" viewBox="0 0 9 9" stroke="#666" className="absolute right-[1px] bottom-[1px]"><path d="M0 9l9-9M4.500 9L9 4.500" /></svg>
        </div>
        <div className="pl-[20px] mt-[19px] text-[15px] leading-[20px] tracking-[0.4px]">Additional resources</div>
        <div className="pl-[22px] mt-[11px] flex items-center text-[15px] leading-[20px] tracking-[0.4px] text-[#666]">
          <PlusMark className="mr-[13px]" />Add link
        </div>
      </div>
      <div className="h-[56px] border-b border-[#e8e8e8]"><GuideHeading sign="+">Applied Filters</GuideHeading></div>
      <div className="h-[202px] border-b border-[#e8e8e8]">
        <GuideHeading sign="-">Data in This Viz</GuideHeading>
        <div className="pl-[27px] pt-[13px] flex items-center text-[17px] leading-[22px] font-light tracking-[0.4px] text-[#444]">
          <svg width="13" height="8" viewBox="0 0 13 8" fill="none" stroke="#333" strokeWidth="1.500" className="mr-[15px]"><path d="M1 1l5.500 5.500L12 1" /></svg>
          Sheet1 (China.csv)
        </div>
        <div className="mt-[31px] pl-[60px] flex flex-col gap-[1px] text-[15px] leading-[25px] font-light tracking-[0.4px] text-[#444]">
          <div className="flex items-center h-[25px]"><Globe size={14} /><span className="ml-[14px]">City</span></div>
          <div className="flex items-center h-[25px]"><Globe size={14} /><span className="ml-[14px]">Country</span></div>
        </div>
      </div>
      <div className="h-[56px] border-b border-[#e8e8e8]"><GuideHeading sign="+">Data Summary</GuideHeading></div>
      <div className="pt-px"><GuideHeading>Detected Outliers</GuideHeading></div>
    </div>
  );
}

/* ---------- bottom bars ---------- */

function SheetTabs() {
  const tab = "h-full border-r border-[#c4c4c4] flex items-center text-[15.500px] text-[#666] shrink-0 pt-px ";
  return (
    <div className="h-[38px] shrink-0 border-y border-[#c4c4c4] bg-[#e6e6e6] flex">
      <div className={tab + "w-[162px] pl-[10px]"}>
        <svg width="8" height="12" viewBox="0 0 8 12" fill="none" stroke="#666" className="mb-[2px]"><rect x="0.500" y="0.500" width="7" height="10.500" rx="1.500" /><path d="M.5 3h7" /></svg>
        <span className="ml-[6px]">Data Source</span>
      </div>
      <div className={tab + "w-[69px] pl-[7px]"}>Sheet 1</div>
      <div className={tab + "w-[70px] pl-[6px] bg-[#fafafa] font-semibold text-[#444] tracking-[0.3px]"}>Sheet 2</div>
      <div className={tab + "w-[70px] pl-[6px] tracking-[0.15px]"}>Sheet 3</div>
      <div className={tab + "w-[70px] pl-[6px] tracking-[0.15px]"}>Sheet 5</div>
      <div className={tab + "w-[115px] pl-[8px]"}>
        <svg width="11" height="11" viewBox="0 0 11 11" fill="none" stroke="#555" className="mb-[2px]"><path d="M.5.500h10v10H.5zM5.500.500v10M.5 5.500h10" /></svg>
        <span className="ml-[5px]">Dashboard</span>
      </div>
      <div className={tab + "w-[32px] justify-center"}>
        <svg width="16" height="16" viewBox="0 0 16 16" fill="none" stroke="#666" strokeWidth="1.200"><path d="M11.500 7V1H1v10.500h6M4 9V7M6 9V4.500M8.500 8V5.500" /><path d="M11.500 8v7M8 11.500h7" strokeWidth="2" /></svg>
      </div>
      <div className={tab + "w-[32px] justify-center"}>
        <svg width="16" height="16" viewBox="0 0 16 16" fill="none" stroke="#666" strokeWidth="1.200"><path d="M11.500 7V1H1v10.500h6M6 1v10.500M1 6h10.500" /><path d="M11.500 8v7M8 11.500h7" strokeWidth="2" /></svg>
      </div>
      <div className={tab + "w-[32px] justify-center"}>
        <svg width="16" height="16" viewBox="0 0 16 16" fill="none" stroke="#666" strokeWidth="1.200"><path d="M11.500 7V1h-2L6.500 3 3.500 1H1v10.500h2l3.500 1.500M6.500 3v8" /><path d="M11.500 8v7M8 11.500h7" strokeWidth="2" /></svg>
      </div>
    </div>
  );
}

function StatusBar() {
  const cell = "border-l border-[#c8c8c8] h-full flex items-center shrink-0 ";
  return (
    <div className="h-[19px] shrink-0 bg-[#ebebeb] flex items-center text-[13px] text-[#222] tracking-[0.15px] overflow-hidden whitespace-nowrap">
      <span className="pl-[2px] w-[79px] mt-[7px]">30 marks</span>
      <span className="mt-[7px] tracking-[-0.05px]">1 row by 1 column</span>
      <div className={cell + "ml-auto w-[157px] pl-[6px]"}>
        <svg width="11" height="14" viewBox="0 0 11 14" fill="none" stroke="#666" strokeWidth="1.200" className="mt-[6px]"><ellipse cx="5.500" cy="3.500" rx="2.300" ry="2.800" /><path d="M1 13v-2c0-3 2-3.500 4.500-3.500S10 8 10 11v2z" /></svg>
        <span className="ml-[9px] mt-[7px] flex-1">Ankit Lehra</span>
        <Caret color="#000" className="mr-[10px] mt-[5px]" />
      </div>
      <div className={cell + "w-[32px]"} />
      <div className={cell + "w-[32px]"} />
      <div className={cell + "w-[57px]"} />
      <div className={cell + "w-[71px] pl-[8px] pt-[6px]"}>
        <svg width="56" height="8" viewBox="0 0 56 8" fill="#b5b5b5"><path d="M0 0h1.200v8H0zM6.500 0v8L2.500 4zM21 0v8l-4-4zM33 0v8l4-4zM48.500 0v8l4-4zM54 0h1.200v8H54z" /></svg>
      </div>
      <div className={cell + "w-[69px] pl-[8px] pt-[5px]"}>
        <svg width="56" height="12" viewBox="0 0 56 12" fill="#bbb">
          <path d="M0 0h3v3H0zM4.200 0h3v3h-3zM8.400 0h3v3h-3zM0 4.300h3v3H0zM4.200 4.300h3v3h-3zM8.400 4.300h3v3h-3zM0 8.600h3v3H0zM4.200 8.600h3v3h-3zM8.400 8.600h3v3h-3zM22 0h11v7H22zM22 8.300h3v3.300h-3zM26 8.300h3v3.300h-3zM30 8.300h3v3.300h-3z" />
          <path d="M44 0h11v11.500H44z" fill="#666" />
        </svg>
      </div>
    </div>
  );
}

/* ---------- page ---------- */

export default function App() {
  return (
    <div className="w-[1918px] h-[1134px] overflow-hidden flex flex-col bg-[#f4f4f4] font-[Roboto,sans-serif]">
      <TitleBar />
      <MenuBar />
      <Toolbar />
      <div className="flex-1 min-h-0 flex">
        <DataPane />
        <CardsColumn />
        <div className="ml-[6px] w-[1046px] shrink-0 flex flex-col gap-[6px]">
          <Shelf label="Columns" icon={<svg width="12" height="12" viewBox="0 0 12 12" stroke="#555" strokeWidth="1.800"><path d="M2 0v2M2 3.500V12M6 0v2M6 3.500V12M10 0v2M10 3.500V12" /></svg>}>
            Longitude (generate..
          </Shelf>
          <Shelf label="Rows" icon={<svg width="12" height="12" viewBox="0 0 12 12" stroke="#555" strokeWidth="1.800"><path d="M0 2h2M3.500 2H12M0 6h2M3.500 6H12M0 10h2M3.500 10H12" /></svg>}>
            Latitude (generated)
          </Shelf>
          <div className="flex">
            <div className="w-[846px] h-[890px] shrink-0 border border-[#cfcfcf] bg-white p-[7px]">
              <MapView />
            </div>
            <Legend />
          </div>
        </div>
        <div className="w-[6px] shrink-0" />
        <DataGuide />
      </div>
      <SheetTabs />
      <StatusBar />
    </div>
  );
}
